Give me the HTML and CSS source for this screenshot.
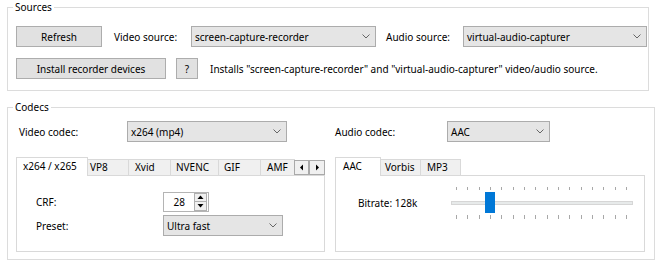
FILE: index.html
```html
<!DOCTYPE html>
<html>
<head>
<meta charset="utf-8">
<link rel="stylesheet" href="styles.css">
</head>
<body>
<div class="page">
  <div class="group sources">
    <span class="legend">Sources</span>
    <div class="row">
      <button class="btn w-refresh">Refresh</button>
      <span class="lbl l-vsrc">Video source:</span>
      <div class="combo w-vsrc"><span>screen-capture-recorder</span><svg class="chev" width="8" height="5" viewBox="0 0 8 5"><polyline points="0.5,0.5 4,4 7.5,0.5" fill="none" stroke="#666" stroke-width="1"/></svg></div>
      <span class="lbl l-asrc">Audio source:</span>
      <div class="combo w-asrc"><span>virtual-audio-capturer</span><svg class="chev" width="8" height="5" viewBox="0 0 8 5"><polyline points="0.5,0.5 4,4 7.5,0.5" fill="none" stroke="#666" stroke-width="1"/></svg></div>
    </div>
    <div class="row row2">
      <button class="btn w-install">Install recorder devices</button>
      <button class="btn w-help">?</button>
      <span class="lbl l-info">Installs "screen-capture-recorder" and "virtual-audio-capturer" video/audio source.</span>
    </div>
  </div>

  <div class="group codecs">
    <span class="legend">Codecs</span>
    <div class="row">
      <span class="lbl l-vcodec">Video codec:</span>
      <div class="combo w-vcodec"><span>x264 (mp4)</span><svg class="chev" width="8" height="5" viewBox="0 0 8 5"><polyline points="0.5,0.5 4,4 7.5,0.5" fill="none" stroke="#666" stroke-width="1"/></svg></div>
      <span class="lbl l-acodec">Audio codec:</span>
      <div class="combo w-acodec"><span>AAC</span><svg class="chev" width="8" height="5" viewBox="0 0 8 5"><polyline points="0.5,0.5 4,4 7.5,0.5" fill="none" stroke="#666" stroke-width="1"/></svg></div>
    </div>

    <div class="tabsrow">
      <div class="tabctl tc-left">
        <div class="tabstrip">
          <div class="tab sel t-x264">x264 / x265</div>
          <div class="tab t-vp8">VP8</div>
          <div class="tab t-xvid">Xvid</div>
          <div class="tab t-nvenc">NVENC</div>
          <div class="tab t-gif">GIF</div>
          <div class="tab t-amf">AMF</div>
          <svg class="scroller" width="31" height="15" viewBox="0 0 31 15">
            <rect x="0.5" y="0.5" width="14" height="14" fill="#f0f0f0" stroke="#a9a9a9"/>
            <rect x="15.5" y="0.5" width="15" height="14" fill="#f0f0f0" stroke="#a9a9a9"/>
            <polygon points="6,7.5 9,4.5 9,10.5" fill="#000"/>
            <polygon points="25,7.5 22,4.5 22,10.5" fill="#000"/>
          </svg>
        </div>
        <div class="panel p-left">
          <div class="prow">
            <span class="plbl">CRF:</span>
            <div class="numeric">
              <span class="numval">28</span>
              <svg class="spin" width="13" height="18" viewBox="0 0 13 18">
                <rect x="0.5" y="0.5" width="12" height="8" fill="#f0f0f0" stroke="#b0b0b0"/>
                <rect x="0.5" y="8.5" width="12" height="9" fill="#f0f0f0" stroke="#b0b0b0"/>
                <polygon points="6.5,2.5 9.5,6 3.5,6" fill="#000"/>
                <polygon points="6.5,14.5 9.5,11 3.5,11" fill="#000"/>
              </svg>
            </div>
          </div>
          <div class="prow prow2">
            <span class="plbl">Preset:</span>
            <div class="combo w-preset"><span>Ultra fast</span><svg class="chev" width="8" height="5" viewBox="0 0 8 5"><polyline points="0.5,0.5 4,4 7.5,0.5" fill="none" stroke="#666" stroke-width="1"/></svg></div>
          </div>
        </div>
      </div>

      <div class="tabctl tc-right">
        <div class="tabstrip">
          <div class="tab sel t-aac">AAC</div>
          <div class="tab t-vorbis">Vorbis</div>
          <div class="tab t-mp3">MP3</div>
        </div>
        <div class="panel p-right">
          <div class="srow">
            <span class="blbl">Bitrate: 128k</span>
            <svg class="slider" width="190" height="36" viewBox="0 0 190 36">
              <g stroke="#a8a8a8" stroke-width="1">
                <line x1="10.5" y1="2" x2="10.5" y2="5"/>
                <line x1="21.5" y1="2" x2="21.5" y2="5"/>
                <line x1="33.5" y1="2" x2="33.5" y2="5"/>
                <line x1="44.5" y1="2" x2="44.5" y2="5"/>
                <line x1="55.5" y1="2" x2="55.5" y2="5"/>
                <line x1="67.5" y1="2" x2="67.5" y2="5"/>
                <line x1="78.5" y1="2" x2="78.5" y2="5"/>
                <line x1="89.5" y1="2" x2="89.5" y2="5"/>
                <line x1="101.5" y1="2" x2="101.5" y2="5"/>
                <line x1="112.5" y1="2" x2="112.5" y2="5"/>
                <line x1="123.5" y1="2" x2="123.5" y2="5"/>
                <line x1="135.5" y1="2" x2="135.5" y2="5"/>
                <line x1="146.5" y1="2" x2="146.5" y2="5"/>
                <line x1="157.5" y1="2" x2="157.5" y2="5"/>
                <line x1="169.5" y1="2" x2="169.5" y2="5"/>
                <line x1="180.5" y1="2" x2="180.5" y2="5"/>
                <line x1="10.5" y1="30" x2="10.5" y2="34"/>
                <line x1="21.5" y1="30" x2="21.5" y2="34"/>
                <line x1="33.5" y1="30" x2="33.5" y2="34"/>
                <line x1="44.5" y1="30" x2="44.5" y2="34"/>
                <line x1="55.5" y1="30" x2="55.5" y2="34"/>
                <line x1="67.5" y1="30" x2="67.5" y2="34"/>
                <line x1="78.5" y1="30" x2="78.5" y2="34"/>
                <line x1="89.5" y1="30" x2="89.5" y2="34"/>
                <line x1="101.5" y1="30" x2="101.5" y2="34"/>
                <line x1="112.5" y1="30" x2="112.5" y2="34"/>
                <line x1="123.5" y1="30" x2="123.5" y2="34"/>
                <line x1="135.5" y1="30" x2="135.5" y2="34"/>
                <line x1="146.5" y1="30" x2="146.5" y2="34"/>
                <line x1="157.5" y1="30" x2="157.5" y2="34"/>
                <line x1="169.5" y1="30" x2="169.5" y2="34"/>
                <line x1="180.5" y1="30" x2="180.5" y2="34"/>
              </g>
              <rect x="5.5" y="16.5" width="181" height="3" fill="#e7eaea" stroke="#d6d6d6"/>
              <rect x="39" y="7" width="10" height="21" fill="#0078d7"/>
            </svg>
          </div>
        </div>
      </div>
    </div>
  </div>
</div>
</body>
</html>
```

FILE: styles.css
```css
* { box-sizing: border-box; }

html, body {
  margin: 0;
  padding: 0;
  background: #fff;
}

body {
  width: 656px;
  height: 266px;
  overflow: hidden;
  font-family: "Noto Sans", "Open Sans", sans-serif;
  font-size: 10px;
  color: #000;
}

.page {
  padding: 7px 0 0 7px;
}

.group {
  position: relative;
  border: 1px solid #dcdcdc;
}

.sources {
  width: 642px;
  height: 84px;
  padding: 18px 0 0 8px;
}

.codecs {
  width: 648px;
  height: 153px;
  margin-top: 16px;
  padding: 13px 0 0 8px;
}

.legend {
  position: absolute;
  top: -8px;
  left: 5px;
  padding: 0 2px;
  background: #fff;
  line-height: 14px;
  white-space: nowrap;
}

.row {
  display: flex;
  align-items: center;
  height: 21px;
}

.row2 { margin-top: 11px; }

.lbl { white-space: nowrap; }

.btn {
  height: 21px;
  padding: 0;
  margin: 0;
  background: #e1e1e1;
  border: 1px solid #adadad;
  font: inherit;
  color: #000;
  display: flex;
  align-items: center;
  justify-content: center;
  white-space: nowrap;
}

.w-refresh { width: 86px; }
.w-install { width: 150px; }
.w-help { width: 22px; margin-left: 10px; }

.l-vsrc { margin-left: 12px; width: 77px; }
.l-asrc { margin-left: 10px; width: 77px; }
.l-info { margin-left: 12px; }

.combo {
  height: 21px;
  background: #e5e5e5;
  border: 1px solid #acacac;
  display: flex;
  align-items: center;
  justify-content: space-between;
  padding: 0 5px 0 3px;
  white-space: nowrap;
}

.chev { flex: none; }

.w-vsrc { width: 185px; }
.w-asrc { width: 184px; }

.l-vcodec { margin-left: 3px; width: 108px; }
.w-vcodec { width: 160px; }
.l-acodec { margin-left: 48px; width: 112px; }
.w-acodec { width: 103px; }

.tabsrow {
  display: flex;
  gap: 10px;
  margin-top: 15px;
}

.tabctl {
  display: flex;
  flex-direction: column;
}

.tc-left { width: 309px; }
.tc-right { width: 310px; }

.tabstrip {
  display: flex;
  align-items: flex-end;
  height: 18px;
  position: relative;
  z-index: 1;
}

.tab {
  height: 16px;
  border: 1px solid #d9d9d9;
  border-bottom: 0;
  margin-right: -1px;
  background: #f0f0f0;
  line-height: 15px;
  white-space: nowrap;
  overflow: hidden;
  flex: none;
}

.tab.sel {
  height: 19px;
  margin-bottom: -1px;
  background: #fff;
  line-height: 17px;
  position: relative;
  z-index: 2;
}

.t-x264 { width: 72px; padding-left: 6px; }
.t-vp8 { width: 42px; padding-left: 2px; }
.t-xvid { width: 43px; padding-left: 6px; }
.t-nvenc { width: 49px; padding-left: 5px; }
.t-gif { width: 43px; padding-left: 5px; }
.t-amf { width: 35px; padding-left: 6px; border-right: 0; }

.t-aac { width: 46px; padding-left: 7px; }
.t-vorbis { width: 41px; padding-left: 4px; }
.t-mp3 { width: 41px; padding-left: 6px; }

.scroller {
  flex: none;
  margin-left: 0;
  margin-bottom: 0;
}

.panel {
  border: 1px solid #d9d9d9;
  background: #fff;
  height: 77px;
}

.p-left {
  padding: 16px 0 0 19px;
}

.prow {
  display: flex;
  align-items: center;
  height: 20px;
}

.prow2 {
  height: 21px;
  margin-top: 3px;
}

.plbl {
  width: 127px;
  white-space: nowrap;
}

.numeric {
  width: 46px;
  height: 20px;
  border: 1px solid #b4b4b4;
  background: #fff;
  display: flex;
  align-items: center;
}

.numval {
  flex: 1;
  text-align: right;
  padding-right: 9px;
}

.spin {
  flex: none;
  margin-right: 1px;
}

.w-preset { width: 120px; }

.p-right {
  padding: 9px 0 0 22px;
}

.srow {
  display: flex;
  align-items: center;
  height: 36px;
}

.blbl {
  width: 88px;
  white-space: nowrap;
}

.slider { flex: none; }
```
